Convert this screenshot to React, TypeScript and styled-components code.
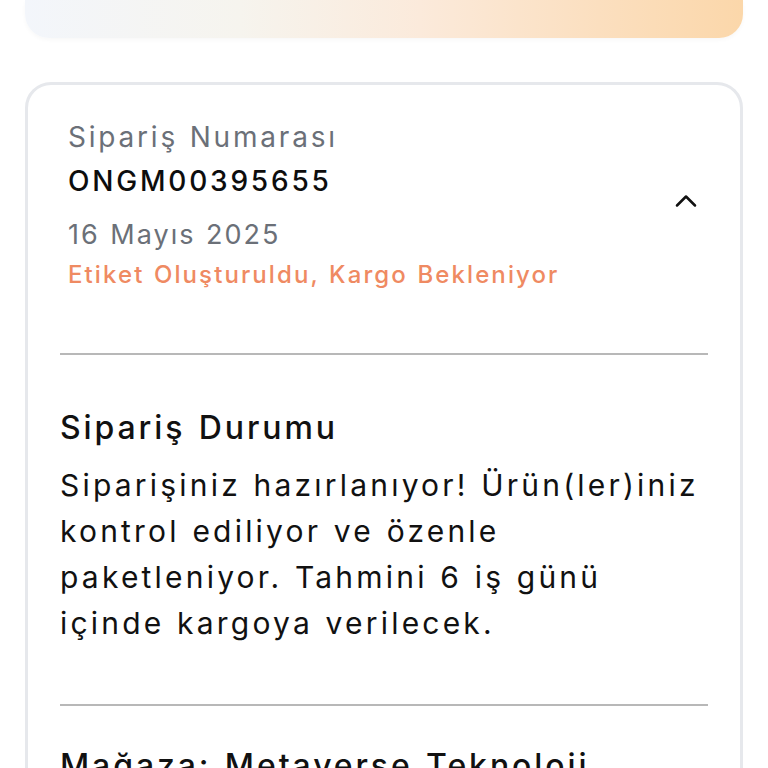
import React from "react";
import styled, { createGlobalStyle } from "styled-components";
import { ChevronUp } from "lucide-react";

const Global = createGlobalStyle`
  html, body { margin: 0; padding: 0; background: #ffffff; }
  body { font-family: "Inter", "Noto Sans", sans-serif; color: #111; }
  * { box-sizing: border-box; }
`;

const Page = styled.div`
  display: flex;
  flex-direction: column;
  gap: 44px;
  padding: 0 25px 0 25px;
  width: 768px;
`;

const Banner = styled.div`
  height: 38px;
  border-radius: 0 0 24px 24px;
  background: linear-gradient(90deg, #f3f6fb 0%, #f6f4ee 30%, #fbeadb 55%, #fbdfbf 80%, #fbd7aa 100%);
  box-shadow: 0 2px 4px rgba(0, 0, 0, 0.03);
`;

const Card = styled.div`
  border: 3px solid #e6e8ec;
  border-radius: 26px;
  background: #fff;
  display: flex;
  flex-direction: column;
  padding-bottom: 40px;
`;

const Header = styled.div`
  display: flex;
  justify-content: space-between;
  align-items: flex-start;
  padding: 30px 36px 0 40px;
  height: 268px;
`;

const HeaderText = styled.div`
  display: flex;
  flex-direction: column;
`;

const Label = styled.div<{ $color?: string; $weight?: number; $size?: number; $mt?: number; $ls?: number }>`
  font-size: ${(p) => p.$size ?? 28}px;
  line-height: 44px;
  color: ${(p) => p.$color ?? "#6b7078"};
  font-weight: ${(p) => p.$weight ?? 400};
  margin-top: ${(p) => p.$mt ?? 0}px;
  letter-spacing: ${(p) => p.$ls ?? 2.8}px;
  word-spacing: 1px;
  white-space: nowrap;
`;

const Toggle = styled.div`
  margin-top: 68px;
  display: flex;
  color: #111;
`;

const Divider = styled.hr`
  border: none;
  border-top: 2px solid #b8b8b8;
  margin: 0 32px;
`;

const Section = styled.div<{ $top: number; $bottom: number }>`
  padding: ${(p) => p.$top}px 32px ${(p) => p.$bottom}px 32px;
  display: flex;
  flex-direction: column;
  gap: 12px;
`;

const Title = styled.div`
  font-size: 32px;
  line-height: 44px;
  font-weight: 500;
  color: #111;
  letter-spacing: 2.9px;
  word-spacing: 2px;
`;

const Body = styled.div`
  font-size: 30px;
  line-height: 46px;
  font-weight: 400;
  color: #111;
  letter-spacing: 3.2px;
  word-spacing: 1px;
`;

export default function App() {
  return (
    <>
      <Global />
      <Page>
        <Banner />
        <Card>
          <Header>
            <HeaderText>
              <Label>Sipariş Numarası</Label>
              <Label $color="#0d0d0d" $weight={500} $ls={2.8}>ONGM00395655</Label>
              <Label $mt={10} $size={27} $ls={2.0}>16 Mayıs 2025</Label>
              <Label $color="#ef8a62" $weight={500} $size={24} $mt={-4} $ls={2.1}>
                Etiket Oluşturuldu, Kargo Bekleniyor
              </Label>
            </HeaderText>
            <Toggle>
              <ChevronUp size={36} strokeWidth={1.7} />
            </Toggle>
          </Header>
          <Divider />
          <Section $top={51} $bottom={58}>
            <Title>Sipariş Durumu</Title>
            <Body>
              Siparişiniz hazırlanıyor! Ürün(ler)iniz kontrol ediliyor ve özenle paketleniyor. Tahmini 6 iş günü içinde kargoya verilecek.
            </Body>
          </Section>
          <Divider />
          <Section $top={38} $bottom={40}>
            <Title>Mağaza: Metaverse Teknoloji</Title>
          </Section>
        </Card>
      </Page>
    </>
  );
}
